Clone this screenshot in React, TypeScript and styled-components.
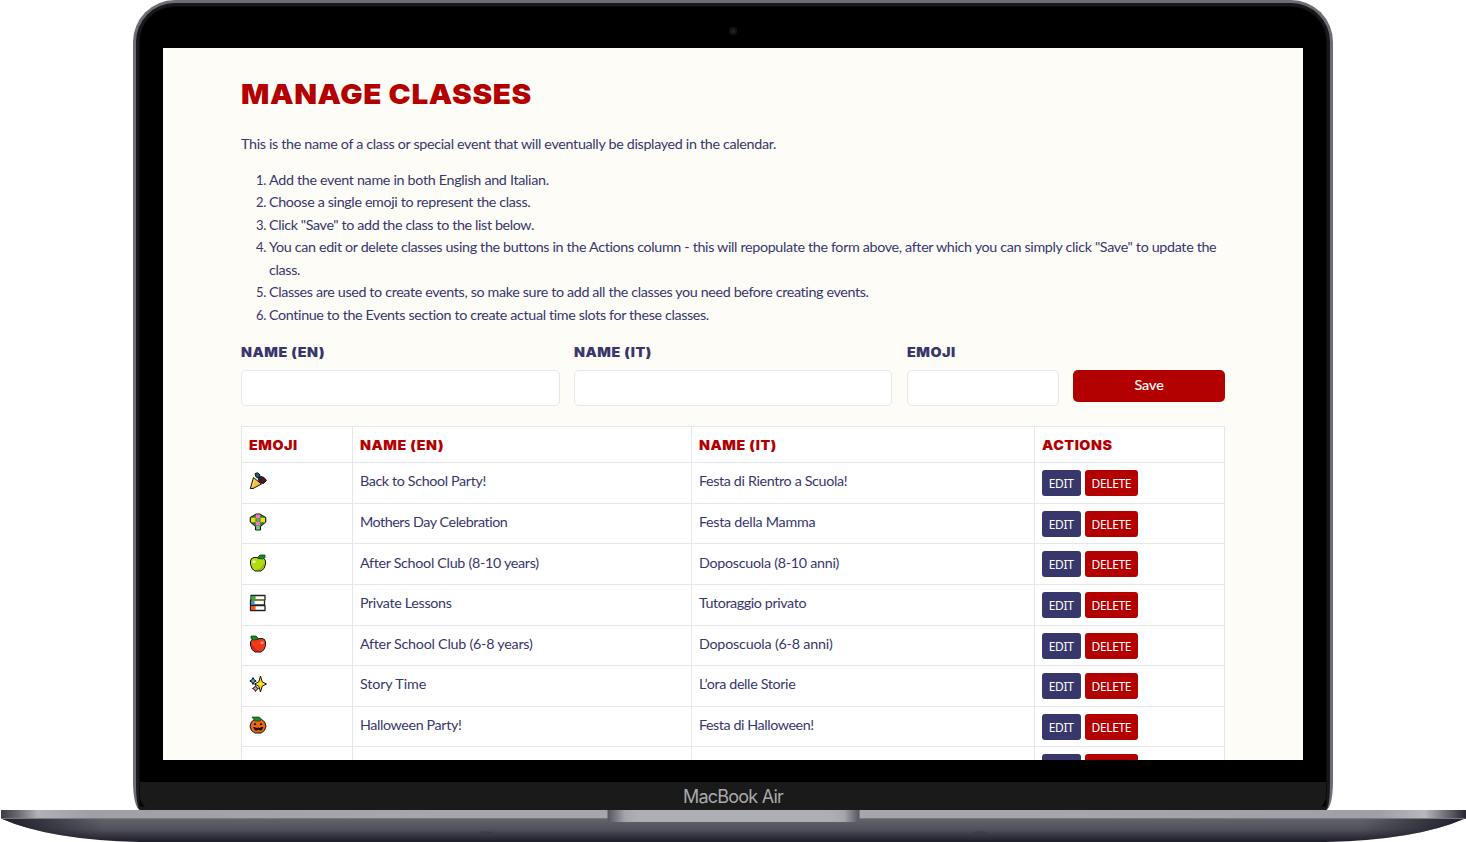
import React from 'react';
import styled, { createGlobalStyle } from 'styled-components';

const RED = '#b30000';
const NAVY = '#37376b';
const LINE = '#e6e7ea';

const Global = createGlobalStyle`
  html, body { margin: 0; padding: 0; background: #fff; overflow: hidden; }
  *, *::before, *::after { box-sizing: border-box; }
`;

const Device = styled.main`
  width: 1466px;
  height: 842px;
  display: flex;
  flex-direction: column;
  align-items: center;
  overflow: hidden;
`;

const Lid = styled.div`
  width: 1200px;
  height: 810px;
  flex: none;
  display: flex;
  flex-direction: column;
  border: 3px solid #6c6d75;
  border-bottom: 0;
  border-radius: 42px 42px 7px 7px / 42px 42px 28px 28px;
  background: #000;
  box-shadow: inset 0 0 0 3px #18191b, inset 0 0 0 4px #0b0b0c;
`;

const CameraBar = styled.div`
  height: 45px;
  flex: none;
  display: flex;
  justify-content: center;
  padding-top: 24px;
`;

const Camera = styled.span`
  width: 8px;
  height: 8px;
  border-radius: 50%;
  background: radial-gradient(circle, #22232b 0 1px, #131315 2.5px);
`;

const Screen = styled.section`
  width: 1140px;
  height: 712px;
  flex: none;
  margin-left: 27.4px;
  overflow: hidden;
  background: #fdfcf7;
  padding: 28px 78.4px 0 77.6px;
  color: ${NAVY};
  font: 14.3px/22.5px Lato, 'Open Sans', sans-serif;
`;

const Chin = styled.div`
  margin: 22px 4px 0;
  height: 28px;
  flex: none;
  padding-top: 1px;
  text-align: center;
  background: #1a1a1a;
  border-radius: 0 0 14px 14px;
  color: #a8a9ad;
  font: 18px/28px Inter, sans-serif;
  letter-spacing: -0.78px;
`;

const BaseArt = styled.svg`
  display: block;
  width: 1466px;
  height: 32px;
  flex: none;
`;

const Title = styled.h1`
  margin: 0;
  width: fit-content;
  color: ${RED};
  font: 900 27.6px/36px Inter, sans-serif;
  letter-spacing: 0.6px;
  white-space: nowrap;
  transform: scaleX(1.073);
  transform-origin: left;
`;

const Intro = styled.p`
  margin: 21px 0 0;
  height: 22.5px;
`;

const Steps = styled.ol`
  margin: 13.2px 0 0;
  padding: 0 0 0 28px;
  letter-spacing: -0.35px;
  li::marker { font-size: 13px; }
`;

const Track = styled.span<{ $ls?: number }>`
  letter-spacing: ${p => p.$ls ?? -0.35}px;
`;

const Form = styled.form`
  display: grid;
  grid-template-columns: 318.7px 318.7px 152.3px 152.3px;
  column-gap: 14.1px;
  margin-top: 14.7px;
`;

const Field = styled.label`
  display: flex;
  flex-direction: column;
`;

const Caption = styled.span<{ $red?: boolean }>`
  display: block;
  width: fit-content;
  color: ${p => (p.$red ? RED : NAVY)};
  font: 900 13.2px/22px Inter, sans-serif;
  letter-spacing: 0.5px;
  transform: scaleX(1.08);
  transform-origin: left;
`;

const Input = styled.input`
  width: 100%;
  height: 36px;
  margin-top: 7px;
  border: 1px solid ${LINE};
  border-radius: 5px;
  background: #fff;
`;

const Save = styled.button`
  height: 32px;
  margin-top: 29px;
  padding: 0 0 1px;
  border: 0;
  border-radius: 5px;
  background: ${RED};
  color: #fff;
  font: 14.3px/30px Lato, sans-serif;
  -webkit-text-stroke: 0.2px #fff;
`;

const Table = styled.div`
  margin-top: 20.6px;
  border: 1px solid ${LINE};
  background: #fff;
`;

const Row = styled.div<{ $head?: boolean }>`
  display: grid;
  grid-template-columns: 111px 339px 343px 1fr;
  height: ${p => (p.$head ? 35.8 : 40.6)}px;
  border-bottom: 1px solid ${LINE};
`;

const Cell = styled.div<{ $head?: boolean }>`
  padding: ${p => (p.$head ? 6.4 : 7.1)}px 0 0 6.9px;
  border-right: 1px solid ${LINE};
  white-space: nowrap;
  &:last-child { border-right: 0; }
`;

const Actions = styled(Cell)`
  display: flex;
  gap: 4px;
  padding: 7px 0 0 6.6px;
`;

const Button = styled.button<{ $danger?: boolean }>`
  width: ${p => (p.$danger ? 53.5 : 39)}px;
  height: 26px;
  padding: 1px 0 0;
  border: 0;
  border-radius: 3px;
  background: ${p => (p.$danger ? RED : NAVY)};
  color: #fff;
  font: 12px/25px 'Noto Sans', sans-serif;
  letter-spacing: -0.35px;
`;

const Emoji = styled.svg`
  display: block;
  width: 18px;
  height: 18px;
  margin-top: 2px;
`;

const outline = { stroke: '#111', strokeWidth: 1, strokeLinejoin: 'round' as const };

const Apple = ({ fill, shade, shine, flip }: { fill: string; shade: string; shine: string; flip?: boolean }) => (
  <g transform={flip ? 'matrix(-1 0 0 1 18 0)' : undefined}>
    <path d="M2.500 4.500 5 3.500H8l1.500.8L12 3.500l3 1 1.500 2.500V10L15 14.500 12 17H6L3 14.500 1.500 10.500V7z" fill={fill} {...outline} />
    <path d="M15.500 8v2L14 14l-2.500 2H7l4-1.500L14 11z" fill={shade} />
    <path d="M9 4.500V3l2-2h5v2.500L13.500 5z" fill="#168b20" stroke="#123d12" strokeWidth=".8" />
    <path d="M3.500 6.500h3v2.500h-3z" fill={shine} />
  </g>
);

const art: Record<string, React.ReactNode> = {
  party: (
    <>
      <path d="M6 1.500 8.500.8l2.500 2-1 3-3-.8z" fill="#1c5f80" {...outline} />
      <path d="m9 6 3-1.500 3 1 2.500 3-3 3-4-1z" fill="#5a1416" {...outline} />
      <path d="m9 4.500 3.500 1v3l-3.500-1z" fill="#18243d" />
      <path d="M4.500 5.500 1.300 16.500 4 16.500l8.500-4.500z" fill="#f7bd3f" {...outline} />
      <path d="m5.500 8-2 6" stroke="#ffe08a" />
    </>
  ),
  bouquet: (
    <>
      <path d="M4.500 2.500 7 1h4l2.500 1.500L16.800 4.500v4.500L11.500 13.500v3.500h-5v-3.500L1.200 9V4.500z" fill="#2f7d2c" {...outline} />
      <path d="M6.800 1.500h4.400V5.500H6.800zM6.800 8.500h4.400v4H6.800z" fill="#f57abb" />
      <path d="M2 4.800h4.500v4.400H2zM11.500 4.800H16v4.400h-4.500z" fill="#f0dc14" />
      <path d="M7.500 5.800h3v2.500h-3z" fill="#54b957" />
      <path d="M7.200 13h3.600v3.500H7.200z" fill="#62d873" />
    </>
  ),
  green: <Apple fill="#b3dc10" shade="#8fba0a" shine="#e9f7a0" />,
  red: <Apple fill="#f03a1b" shade="#cf2310" shine="#ff9a80" flip />,
  books: (
    <>
      <path d="M2 1.500h14v4.500H2zM1.500 6h14v5h-14zM1.500 11.500H16V16.500H1.500z" fill="#fff" stroke="#222" strokeWidth="1.300" strokeLinejoin="round" />
      <path d="M2.600 2h4v3.300h-4z" fill="#2fae3b" />
      <path d="M2.500 6h13" stroke="#8f9a20" strokeWidth="1.300" />
      <path d="M2 7h3.500v3.500H2z" fill="#2a97dc" />
      <path d="M2 12h4.500v4H2z" fill="#f05423" />
    </>
  ),
  sparkles: (
    <>
      <path d="m11.500 1 1.700 5.800L17.500 9l-4.300 2.200-1.700 5.800-1.700-5.800L5.500 9l4.300-2.200z" fill="#ffe016" {...outline} />
      <path d="m4 2.500 1 2.200L7.200 6 5 7.200 4 9.500 3 7.200.8 6 3 4.700z" fill="#35a7dd" {...outline} />
      <path d="m6.500 10.500 1 1.900 2 1.100-2 1.100-1 1.900-1-1.900-2-1.100 2-1.100z" fill="#e58ab8" {...outline} />
    </>
  ),
  pumpkin: (
    <>
      <path d="M5.500 3.500h7l3.200 2.500 1.300 4.500-1.600 4-3.200 2.500H6l-3.500-2.500L1 10.500 2.300 6z" fill="#f2660f" {...outline} />
      <path d="M3 1h7l2.500 2-1.500 2H6z" fill="#17892b" stroke="#123d12" strokeWidth=".7" />
      <path d="m4.500 9 1.500-2.500L7.500 9zM10.500 9 12 6.500 13.500 9zM4 11h2l1 1 2-.5 2 .5 1-1h2.500L12.500 14.500h-2l-1-1-1 1H6z" fill="#15100c" />
    </>
  ),
};

const classes: { icon: string; en: string; it: string; enLs: number; itLs: number }[] = [
  { icon: 'party', en: 'Back to School Party!', it: 'Festa di Rientro a Scuola!', enLs: -0.36, itLs: -0.35 },
  { icon: 'bouquet', en: 'Mothers Day Celebration', it: 'Festa della Mamma', enLs: -0.44, itLs: -0.27 },
  { icon: 'green', en: 'After School Club (8-10 years)', it: 'Doposcuola (8-10 anni)', enLs: -0.3, itLs: -0.27 },
  { icon: 'books', en: 'Private Lessons', it: 'Tutoraggio privato', enLs: -0.33, itLs: -0.4 },
  { icon: 'red', en: 'After School Club (6-8 years)', it: 'Doposcuola (6-8 anni)', enLs: -0.24, itLs: -0.2 },
  { icon: 'sparkles', en: 'Story Time', it: 'L’ora delle Storie', enLs: -0.1, itLs: -0.35 },
  { icon: 'pumpkin', en: 'Halloween Party!', it: 'Festa di Halloween!', enLs: -0.37, itLs: -0.42 },
];

const steps: [string, number][] = [
  ['Add the event name in both English and Italian.', -0.31],
  ['Choose a single emoji to represent the class.', -0.35],
  ['Click "Save" to add the class to the list below.', -0.375],
  ['You can edit or delete classes using the buttons in the Actions column - this will repopulate the form above, after which you can simply click "Save" to update the class.', -0.337],
  ['Classes are used to create events, so make sure to add all the classes you need before creating events.', -0.355],
  ['Continue to the Events section to create actual time slots for these classes.', -0.36],
];

const LaptopBase = () => (
  <BaseArt viewBox="0 0 1466 32">
    <defs>
      <linearGradient id="under" x2="0" y2="1">
        <stop offset="0" stopColor="#62636b" />
        <stop offset=".45" stopColor="#50515a" />
        <stop offset="1" stopColor="#1d1c29" />
      </linearGradient>
      <linearGradient id="deck">
        <stop offset="0" stopColor="#3a3b43" />
        <stop offset=".012" stopColor="#6c6d74" />
        <stop offset=".025" stopColor="#b1b2b6" />
        <stop offset=".06" stopColor="#9fa0a5" />
        <stop offset=".3" stopColor="#a6a7ab" />
        <stop offset=".7" stopColor="#a6a7ab" />
        <stop offset=".94" stopColor="#9fa0a5" />
        <stop offset=".972" stopColor="#b7b8bb" />
        <stop offset=".99" stopColor="#5a5b63" />
        <stop offset="1" stopColor="#25262f" />
      </linearGradient>
      <linearGradient id="notch">
        <stop offset="0" stopColor="#53545d" />
        <stop offset=".07" stopColor="#a5a6ab" />
        <stop offset=".12" stopColor="#aeafb4" />
        <stop offset=".88" stopColor="#aeafb4" />
        <stop offset=".94" stopColor="#a5a6ab" />
        <stop offset="1" stopColor="#53545d" />
      </linearGradient>
      <linearGradient id="tips">
        <stop offset="0" stopColor="#1d1c29" />
        <stop offset=".07" stopColor="#1d1c29" stopOpacity="0" />
        <stop offset=".93" stopColor="#1d1c29" stopOpacity="0" />
        <stop offset="1" stopColor="#1d1c29" />
      </linearGradient>
    </defs>
    <path d="M1 8.500Q50 30 140 32H1326Q1416 30 1465 8.500Z" fill="url(#under)" />
    <path d="M1 8.500Q50 30 140 32H1326Q1416 30 1465 8.500Z" fill="url(#tips)" />
    <path d="M1 0H1466V9H1z" fill="url(#deck)" />
    <path d="M1 8.500H1465" stroke="#777880" />
    <path d="M607.500 0H859.500V8Q859.500 12 854 12H613Q607.500 12 607.500 8Z" fill="url(#notch)" />
    <path d="M478 22.500q8-2 16 0l-3 1.300h-10zM972 22.500q8-2 16 0l-3 1.300h-10z" fill="#3a3b44" />
  </BaseArt>
);

export default function App() {
  return (
    <Device>
      <Global />
      <Lid>
        <CameraBar><Camera /></CameraBar>
        <Screen>
          <Title>MANAGE CLASSES</Title>
          <Intro><Track $ls={-0.32}>This is the name of a class or special event that will eventually be displayed in the calendar.</Track></Intro>
          <Steps>
            {steps.map(([text, ls]) => <li key={text}><Track $ls={ls}>{text}</Track></li>)}
          </Steps>
          <Form>
            <Field><Caption>NAME (EN)</Caption><Input /></Field>
            <Field><Caption>NAME (IT)</Caption><Input /></Field>
            <Field><Caption>EMOJI</Caption><Input /></Field>
            <Save type="button">Save</Save>
          </Form>
          <Table>
            <Row $head>
              {['EMOJI', 'NAME (EN)', 'NAME (IT)', 'ACTIONS'].map(h => (
                <Cell key={h} $head><Caption $red>{h}</Caption></Cell>
              ))}
            </Row>
            {classes.map(c => (
              <Row key={c.en}>
                <Cell><Emoji viewBox="0 0 18 18">{art[c.icon]}</Emoji></Cell>
                <Cell><Track $ls={c.enLs}>{c.en}</Track></Cell>
                <Cell><Track $ls={c.itLs}>{c.it}</Track></Cell>
                <Actions><Button>EDIT</Button><Button $danger>DELETE</Button></Actions>
              </Row>
            ))}
            <Row>
              <Cell />
              <Cell />
              <Cell />
              <Actions><Button /><Button $danger /></Actions>
            </Row>
          </Table>
        </Screen>
        <Chin>MacBook Air</Chin>
      </Lid>
      <LaptopBase />
    </Device>
  );
}
